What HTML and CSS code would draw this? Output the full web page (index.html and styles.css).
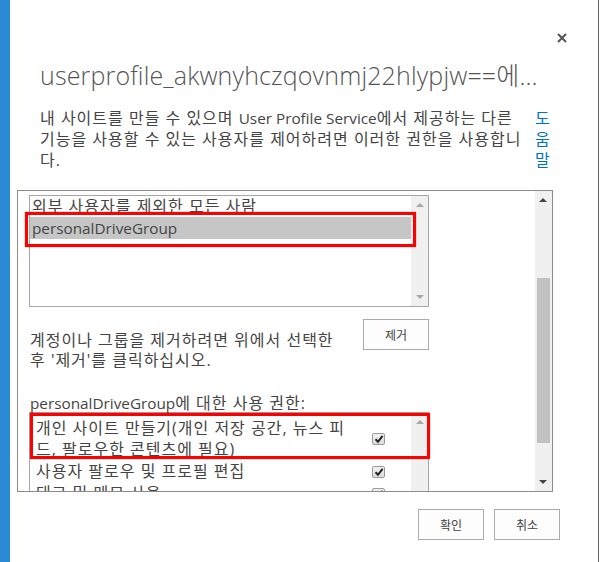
FILE: index.html
```html
<!DOCTYPE html>
<html lang="ko">
<head>
<meta charset="utf-8">
<title>사용 권한</title>
<link rel="stylesheet" href="styles.css">
</head>
<body>
<div class="page">
  <div class="accent"></div>
  <div class="dialog">
    <div class="head">
      <h1 class="title">userprofile_akwnyhczqovnmj22hlypjw==에...</h1>
      <svg class="close" width="10" height="10" viewBox="0 0 10 10"><path d="M1 1L9 9M9 1L1 9" stroke="#555" stroke-width="2" fill="none"/></svg>
    </div>
    <div class="desc-row">
      <div class="desc">
        <span class="line">내 사이트를 만들 수 있으며 <span class="en">User Profile Service</span>에서 제공하는 다른</span>
        <span class="line">기능을 사용할 수 있는 사용자를 제어하려면 이러한 권한을 사용합니</span>
        <span class="line">다.</span>
      </div>
      <a class="help" href="#">도 움 말</a>
    </div>
    <div class="frame">
      <div class="frame-body">
        <div class="listbox">
          <div class="list">
            <div class="item">외부 사용자를 제외한 모든 사람</div>
            <div class="item selected"><span class="en">personalDriveGroup</span></div>
          </div>
          <div class="vbar">
            <span class="arrow up light"></span>
            <span class="spacer"></span>
            <span class="arrow down light"></span>
          </div>
        </div>
        <div class="remove-row">
          <p class="remove-text">계정이나 그룹을 제거하려면 위에서 선택한<br>후 '제거'를 클릭하십시오.</p>
          <button class="btn">제거</button>
        </div>
        <div class="perm-label"><span class="en">personalDriveGroup</span>에 대한 사용 권한:</div>
        <div class="permbox">
          <div class="perms">
            <div class="perm"><span>개인 사이트 만들기(개인 저장 공간, 뉴스 피<br>드, 팔로우한 콘텐츠에 필요)</span><span class="cb"><svg width="10" height="10" viewBox="0 0 10 10"><path d="M1.5 5.2L4 7.8L8.6 1.8" stroke="#222" stroke-width="2" fill="none"/></svg></span></div>
            <div class="perm"><span>사용자 팔로우 및 프로필 편집</span><span class="cb"><svg width="10" height="10" viewBox="0 0 10 10"><path d="M1.5 5.2L4 7.8L8.6 1.8" stroke="#222" stroke-width="2" fill="none"/></svg></span></div>
            <div class="perm"><span>태그 및 메모 사용</span><span class="cb"><svg width="10" height="10" viewBox="0 0 10 10"><path d="M1.5 5.2L4 7.8L8.6 1.8" stroke="#222" stroke-width="2" fill="none"/></svg></span></div>
          </div>
          <div class="vbar tall">
            <span class="arrow up light"></span>
            <span class="spacer"></span>
          </div>
        </div>
      </div>
      <div class="vbar outer">
        <span class="arrow up"></span>
        <span class="thumb"></span>
        <span class="spacer"></span>
        <span class="arrow down"></span>
      </div>
      <div class="mark mark-group"></div>
      <div class="mark mark-perm"></div>
    </div>
    <div class="footer">
      <button class="btn">확인</button>
      <button class="btn">취소</button>
    </div>
  </div>
  <div class="edge"></div>
</div>
</body>
</html>
```

FILE: styles.css
```css
* { box-sizing: border-box; }

body {
  margin: 0;
  background: #fff;
  color: #444;
  font-family: "Open Sans", "Noto Sans CJK KR", sans-serif;
}

.page {
  display: flex;
  width: 601px;
  height: 562px;
  overflow: hidden;
}

.accent {
  flex: none;
  width: 10px;
  background: #2a8ad4;
}

.dialog {
  flex: none;
  width: 588px;
}

.edge {
  flex: none;
  width: 1px;
  background: #666;
}

.head {
  display: flex;
  justify-content: space-between;
  padding: 0 31px 0 30px;
}

.title {
  margin: 60px 0 0;
  font-size: 25px;
  letter-spacing: 0.15px;
  line-height: 30px;
  font-weight: 300;
  color: #555;
  white-space: nowrap;
}

.close {
  flex: none;
  margin-top: 33px;
}

.en {
  font-size: 15.3px;
  letter-spacing: 0;
}

.desc-row {
  display: flex;
  margin-top: 18px;
  padding-left: 30px;
  font-size: 16px;
  letter-spacing: 1px;
  line-height: 21px;
}

.desc {
  width: 495px;
}

.line {
  display: block;
  white-space: nowrap;
}

.help {
  width: 16px;
  color: #0072c6;
  text-decoration: none;
  letter-spacing: 0;
}

.frame {
  position: relative;
  display: flex;
  width: 536px;
  height: 302px;
  margin: 19px 0 0 7px;
  border: 1px solid #8c8c8c;
  overflow: hidden;
  font-size: 16px;
  letter-spacing: 1px;
}

.frame-body {
  width: 517px;
  padding: 4px 0 0 11px;
}

.listbox {
  display: flex;
  width: 400px;
  height: 112px;
  border: 1px solid #a6a6a6;
}

.list {
  flex: 1;
  overflow: hidden;
}

.item {
  margin-top: -1px;
  padding-left: 2px;
  height: 22px;
  line-height: 22px;
  white-space: nowrap;
}

.item + .item { margin-top: 0; }

.item.selected { background: #c6c6c6; }

.vbar {
  display: flex;
  flex-direction: column;
  align-items: center;
  width: 17px;
  background: #f0f0f0;
}

.vbar .spacer { flex: 1; }

.arrow {
  display: block;
  width: 0;
  height: 0;
  border-left: 4px solid transparent;
  border-right: 4px solid transparent;
  margin: 7px 0;
}

.arrow.up { border-bottom: 4px solid #444; }
.arrow.down { border-top: 4px solid #444; }
.arrow.up.light { border-bottom-color: #a8a8a8; }
.arrow.down.light { border-top-color: #a8a8a8; }

.vbar.outer {
  flex: none;
  align-items: flex-start;
}

.vbar.outer .arrow { margin-left: 4px; }

.thumb {
  display: block;
  width: 13px;
  height: 165px;
  margin: 69px 0 0 2px;
  background: #c1c1c1;
}

.remove-row {
  display: flex;
  justify-content: space-between;
  align-items: flex-start;
  width: 400px;
  margin-top: 12px;
}

.remove-text {
  margin: 11px 0 0;
  padding-left: 1px;
  line-height: 20px;
}

.btn {
  width: 66px;
  height: 31px;
  padding: 0;
  border: 1px solid #ababab;
  background: #fdfdfd;
  color: #444;
  font-family: "Open Sans", "Noto Sans CJK KR", sans-serif;
  font-size: 12px;
  letter-spacing: 0;
}

.perm-label {
  margin-top: 24px;
  padding-left: 1px;
  line-height: 18px;
  white-space: nowrap;
}

.permbox {
  display: flex;
  width: 400px;
  height: 160px;
  border: 1px solid #a6a6a6;
}

.perms {
  flex: 1;
  padding-top: 4px;
}

.perm {
  display: flex;
  justify-content: space-between;
  align-items: center;
  padding: 1px 26px 0 6px;
  line-height: 21px;
  white-space: nowrap;
}

.cb {
  display: flex;
  align-items: center;
  justify-content: center;
  width: 13px;
  height: 12px;
  border: 1px solid #9a9a9a;
  border-radius: 2px;
  background: linear-gradient(#f2f2f2, #dcdcdc);
}

.mark {
  position: absolute;
  border: 3px solid #ff0000;
  box-shadow: 0 0 1px 0 rgba(255, 0, 0, 0.7);
}

.mark-group {
  left: 7px;
  top: 21px;
  width: 391px;
  height: 35px;
}

.mark-perm {
  left: 12px;
  top: 222px;
  width: 400px;
  height: 46px;
}

.footer {
  display: flex;
  justify-content: flex-end;
  gap: 10px;
  margin-top: 17px;
  padding-right: 38px;
}
```
